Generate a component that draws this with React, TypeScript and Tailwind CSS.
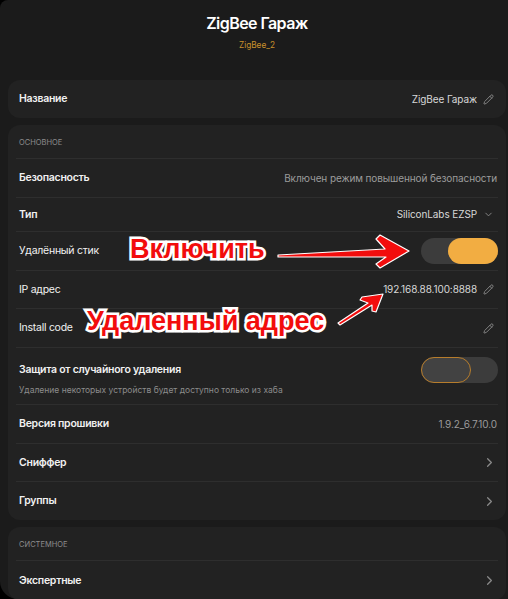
import { Pencil, ChevronDown, ChevronRight } from "lucide-react";

function Divider() {
  return <div className="mx-2 h-px bg-[#2e2e2e]" />;
}

function Row({
  label,
  bold = true,
  right,
  h = "h-[38px]",
}: {
  label: string;
  bold?: boolean;
  right?: React.ReactNode;
  h?: string;
}) {
  return (
    <div className={`flex items-center justify-between pl-[11px] pr-[8px] ${h}`}>
      <span
        className={`text-[10.5px] tracking-[-0.025em] text-[#f1f1f1] ${bold ? "font-semibold" : "font-normal"}`}
      >
        {label}
      </span>
      <div className="flex items-center gap-[6px] text-[10px] tracking-[-0.01em] text-[#b4b4b4]">{right}</div>
    </div>
  );
}

function Toggle({ on }: { on: boolean }) {
  return (
    <div className="flex h-[26px] w-[77px] rounded-full bg-[#3c3c3c]">
      {on ? (
        <div className="ml-auto h-[26px] w-[50px] rounded-full bg-[#f2ad42]" />
      ) : (
        <div className="h-[26px] w-[50px] rounded-full border border-[#b77d2c] bg-[#424242]" />
      )}
    </div>
  );
}

function EditIcon() {
  return <Pencil size={11} strokeWidth={2} className="mr-[4px] text-[#8a8a8a]" />;
}

function Arrowed({ children }: { children: React.ReactNode }) {
  return <ChevronRight size={15} strokeWidth={2} className="mr-[1px] text-[#8a8a8a]">{children}</ChevronRight>;
}

export default function App() {
  return (
    <div className="h-[599px] w-full overflow-hidden bg-black" style={{ fontFamily: "Inter, 'Noto Sans', sans-serif" }}>
      <div className="relative h-full rounded-tl-[8px] rounded-bl-[18px] bg-[#1b1b1b] pl-[8px] pr-[2px]">
        {/* Header */}
        <div className="flex flex-col items-center pt-[13px]">
          <h1 className="text-[16px] font-semibold leading-[20px] tracking-[-0.035em] text-white">ZigBee Гараж</h1>
          <p className="mt-[6px] text-[8.25px] leading-[12px] text-[#c8902c]">ZigBee_2</p>
        </div>

        {/* Name card */}
        <div className="mt-[29px] rounded-[12px] bg-[#222222]">
          <Row
            label="Название"
            right={
              <>
                <span className="text-[#d8d8d8]">ZigBee Гараж</span>
                <EditIcon />
              </>
            }
          />
        </div>

        {/* Main card */}
        <div className="mt-[7px] rounded-[12px] bg-[#222222]">
          <div className="flex h-[33px] items-center pl-[11px] pt-[2px]">
            <span className="text-[7.5px] uppercase text-[#8c8c8c]">Основное</span>
          </div>
          <Divider />
          <Row
            label="Безопасность"
            h="h-[38px]"
            right={<span className="pr-[1px] text-[#9c9c9c]">Включен режим повышенной безопасности</span>}
          />
          <Divider />
          <Row
            label="Тип"
            h="h-[33px]"
            right={
              <>
                <span className="text-[#d8d8d8]">SiliconLabs EZSP</span>
                <ChevronDown size={11} strokeWidth={2} className="mr-[4px] text-[#8a8a8a]" />
              </>
            }
          />
          <Divider />
          <Row label="Удалённый стик" bold={false} h="h-[38px]" right={<Toggle on />} />
          <Divider />
          <Row
            label="IP адрес"
            bold={false}
            h="h-[37px]"
            right={
              <>
                <span className="text-[#d8d8d8]">192.168.88.100:8888</span>
                <EditIcon />
              </>
            }
          />
          <Divider />
          <Row label="Install code" bold={false} h="h-[38px]" right={<EditIcon />} />
          <Divider />
          <div className="flex h-[56px] flex-col justify-center pl-[11px] pr-[8px]">
            <div className="flex items-center justify-between">
              <span className="text-[10.5px] font-semibold tracking-[-0.025em] text-[#f1f1f1]">
                Защита от случайного удаления
              </span>
              <Toggle on={false} />
            </div>
            <span className="mt-[1px] text-[8.5px] leading-[12px] text-[#8c8c8c]">
              Удаление некоторых устройств будет доступно только из хаба
            </span>
          </div>
          <Divider />
          <Row label="Версия прошивки" h="h-[38px]" right={<span className="pr-[1px] text-[#9c9c9c]">1.9.2_6.7.10.0</span>} />
          <Divider />
          <Row label="Сниффер" h="h-[37px]" right={<Arrowed>{null}</Arrowed>} />
          <Divider />
          <Row label="Группы" h="h-[38px]" right={<Arrowed>{null}</Arrowed>} />
        </div>

        {/* System card */}
        <div className="mt-[7px] rounded-[12px] bg-[#222222]">
          <div className="flex h-[33px] items-center pl-[11px] pt-[2px]">
            <span className="text-[7.5px] uppercase text-[#8c8c8c]">Системное</span>
          </div>
          <Divider />
          <Row label="Экспертные" h="h-[39px]" right={<Arrowed>{null}</Arrowed>} />
        </div>

        {/* Annotations */}
        <span
          className="absolute left-[130px] top-[232px] text-[27px] font-bold leading-[34px] text-[#f20d0d] [paint-order:stroke_fill] [-webkit-text-stroke:5px_white]"
          style={{ fontFamily: "'Liberation Sans', Arial, sans-serif" }}
        >
          Включить
        </span>
        <span
          className="absolute left-[87px] top-[304px] text-[27px] font-bold leading-[34px] text-[#f20d0d] [paint-order:stroke_fill] [-webkit-text-stroke:5px_white]"
          style={{ fontFamily: "'Liberation Sans', Arial, sans-serif" }}
        >
          Удаленный адрес
        </span>
        <svg className="absolute left-0 top-0" width="508" height="599" viewBox="0 0 508 599">
          <path
            d="M278 255 L385 249 L376 239 L380 235 L409 251 L380 268 L376 264 L386 257 L278 257 Z"
            fill="#f20d0d"
            stroke="white"
            strokeWidth="1.2"
            strokeLinejoin="round"
          />
          <path
            d="M338 323 L368 303 L360 300 L362 297 L383 294 L376 312 L372 311 L372 305 L340 325 Z"
            fill="#f20d0d"
            stroke="white"
            strokeWidth="1.2"
            strokeLinejoin="round"
          />
        </svg>
      </div>
    </div>
  );
}
